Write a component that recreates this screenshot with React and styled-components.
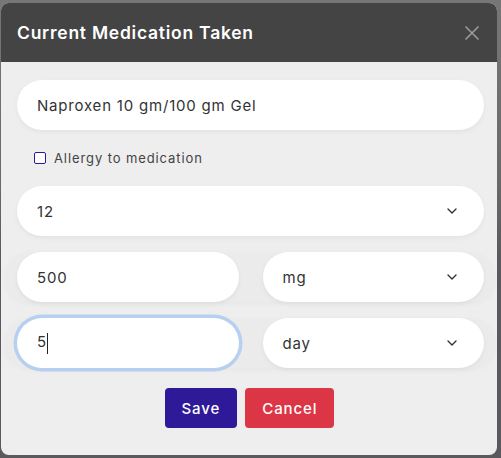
import React from 'react';
import styled, { createGlobalStyle } from 'styled-components';

const GlobalStyle = createGlobalStyle`
  html, body {
    margin: 0;
    padding: 0;
    background: #6d6d6d;
    font-family: Inter, "Noto Sans", sans-serif;
  }
`;

const Backdrop = styled.div`
  width: 501px;
  height: 458px;
  box-sizing: border-box;
  padding: 3px 4px 3px 1px;
  background: linear-gradient(to bottom, #777 0, #6a6a6a 180px, #5a5a5e 260px, #5a5a5e 458px);
`;

const Modal = styled.div`
  height: 452px;
  border-radius: 8px;
  overflow: hidden;
  background: #eeeeee;
  display: flex;
  flex-direction: column;
`;

const Header = styled.div`
  height: 59px;
  flex-shrink: 0;
  background: #444444;
  display: flex;
  align-items: center;
  justify-content: space-between;
  padding: 0 17px 0 16px;
`;

const Title = styled.h2`
  margin: 0;
  color: #fff;
  font-size: 17.5px;
  font-weight: 600;
  letter-spacing: 0.75px;
`;

const CloseButton = styled.button`
  border: 0;
  background: none;
  padding: 0;
  display: flex;
  cursor: pointer;
`;

const Body = styled.div`
  padding: 18px 13px 0 16px;
  display: flex;
  flex-direction: column;
`;

const Pill = styled.div`
  height: 50px;
  flex-shrink: 0;
  box-sizing: border-box;
  border-radius: 25px;
  background: #fff;
  box-shadow: ${p => (p.$focused ? '0 0 0 3.5px #b7cff1' : '0 2px 5px rgba(0, 0, 0, 0.05)')};
  display: flex;
  align-items: center;
  justify-content: space-between;
  padding: 0 27px 0 20px;
  font-size: 15px;
  letter-spacing: 0.8px;
  color: #333;
  min-width: 0;
`;

const Field = styled.input`
  border: 0;
  outline: none;
  background: transparent;
  font: inherit;
  letter-spacing: inherit;
  color: inherit;
  padding: 0;
  width: 100%;
`;

const Caret = styled.span`
  display: inline-block;
  width: 1px;
  height: 21px;
  background: #222;
  vertical-align: middle;
`;

const CheckRow = styled.label`
  height: 56px;
  display: flex;
  align-items: center;
  padding-left: 17px;
  gap: 8px;
  font-size: 13px;
  letter-spacing: 0.9px;
  color: #444;
`;

const Box = styled.span`
  width: 10px;
  height: 10px;
  border: 1.5px solid #2e1a98;
  border-radius: 2px;
  background: #fff;
  margin-top: -1px;
`;

const Row = styled.div`
  display: flex;
  gap: 24px;
  margin: 16px -11px 0 -12px;
  padding: 0 11px 0 12px;
  border-radius: 25px;
  background: #ebebeb;
  box-shadow: 0 2px 6px rgba(0, 0, 0, 0.03);

  & > * {
    flex: 1 1 0;
  }
`;

const Buttons = styled.div`
  display: flex;
  justify-content: center;
  gap: 8px;
  margin-top: 20px;
  padding-right: 2px;
`;

const Button = styled.button`
  height: 40px;
  border: 0;
  border-radius: 4px;
  padding: 0 17px;
  color: #fff;
  font-family: inherit;
  font-size: 15px;
  font-weight: 500;
  letter-spacing: 0.9px;
  background: ${p => p.$bg};
  cursor: pointer;
`;

const Chevron = () => (
  <svg width="10" height="6" viewBox="0 0 10 6" fill="none">
    <path d="M1 1 L5 5 L9 1" stroke="#333" strokeWidth="1.4" strokeLinecap="round" strokeLinejoin="round" />
  </svg>
);

const Select = ({ value }) => (
  <Pill>
    <span>{value}</span>
    <Chevron />
  </Pill>
);

export default function App() {
  return (
    <>
      <GlobalStyle />
      <Backdrop>
        <Modal>
          <Header>
            <Title>Current Medication Taken</Title>
            <CloseButton aria-label="Close">
              <svg width="16" height="16" viewBox="0 0 16 16">
                <path d="M1.5 1.5 L14.5 14.5 M14.5 1.5 L1.5 14.5" stroke="#9a9a9a" strokeWidth="1.6" />
              </svg>
            </CloseButton>
          </Header>
          <Body>
            <Pill>
              <Field readOnly value="Naproxen 10 gm/100 gm Gel" />
            </Pill>
            <CheckRow>
              <Box />
              Allergy to medication
            </CheckRow>
            <Select value="12" />
            <Row>
              <Pill>
                <Field readOnly value="500" />
              </Pill>
              <Select value="mg" />
            </Row>
            <Row>
              <Pill $focused>
                <span>5<Caret /></span>
              </Pill>
              <Select value="day" />
            </Row>
            <Buttons>
              <Button $bg="#2e1a99">Save</Button>
              <Button $bg="#dc3545">Cancel</Button>
            </Buttons>
          </Body>
        </Modal>
      </Backdrop>
    </>
  );
}
